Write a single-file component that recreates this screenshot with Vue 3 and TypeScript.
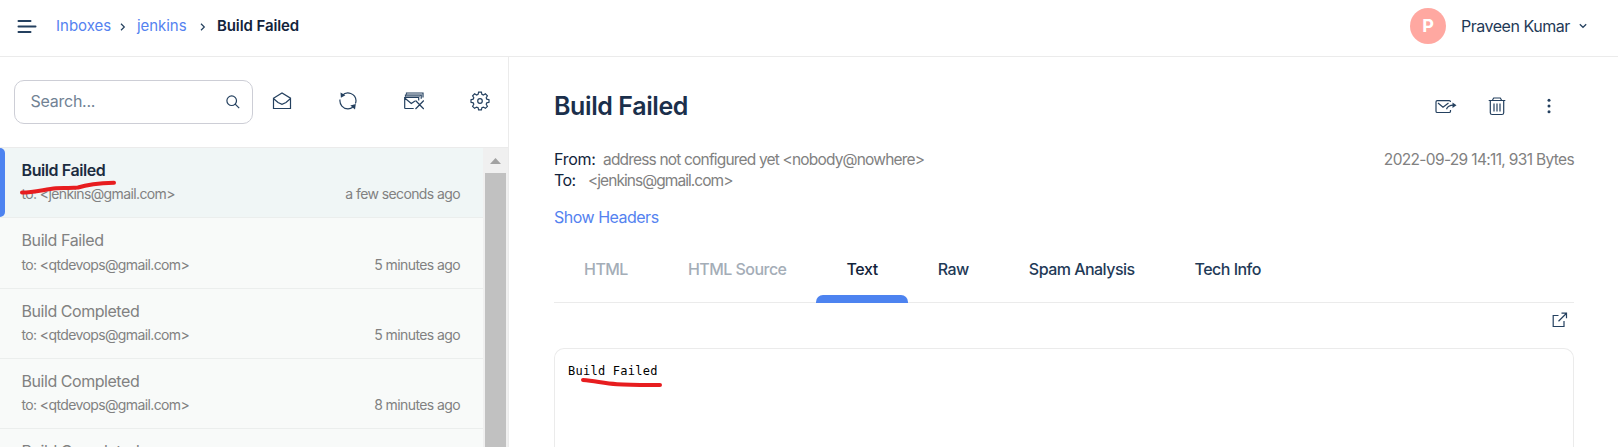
<script setup lang="ts">
interface Mail { subject: string; to: string; age: string; active?: boolean }
interface Tab { label: string; state: string }

const mails: Mail[] = [
  { subject: 'Build Failed', to: '<jenkins@gmail.com>', age: 'a few seconds ago', active: true },
  { subject: 'Build Failed', to: '<qtdevops@gmail.com>', age: '5 minutes ago' },
  { subject: 'Build Completed', to: '<qtdevops@gmail.com>', age: '5 minutes ago' },
  { subject: 'Build Completed', to: '<qtdevops@gmail.com>', age: '8 minutes ago' },
  { subject: 'Build Completed', to: '<qtdevops@gmail.com>', age: '8 minutes ago' },
]

const tabs: Tab[] = [
  { label: 'HTML', state: 'muted' },
  { label: 'HTML Source', state: 'muted' },
  { label: 'Text', state: 'current' },
  { label: 'Raw', state: '' },
  { label: 'Spam Analysis', state: '' },
  { label: 'Tech Info', state: '' },
]
</script>

<template>
  <div class="app">
    <header class="topbar">
      <svg class="burger" width="20" height="16" viewBox="0 0 20 16"><path d="M1.5 2h12M1.5 7.5h17M1.5 13h12" /></svg>
      <nav class="crumbs">
        <a class="c1">Inboxes</a>
        <svg class="s1" width="6" height="8" viewBox="0 0 6 8"><path d="M1 .8 4.3 4 1 7.2" /></svg>
        <a class="c2">jenkins</a>
        <svg class="s2" width="6" height="8" viewBox="0 0 6 8"><path d="M1 .8 4.3 4 1 7.2" /></svg>
        <strong>Build Failed</strong>
      </nav>
      <div class="user">
        <span class="avatar">P</span>
        <span class="name">Praveen Kumar</span>
        <svg width="8" height="6" viewBox="0 0 8 6"><path d="M.8 1.2 4 4.3 7.2 1.2" /></svg>
      </div>
    </header>

    <div class="body">
      <aside class="sidebar">
        <div class="tools">
          <div class="search">
            <span>Search...</span>
            <svg width="14" height="14" viewBox="0 0 14 14"><circle cx="5.7" cy="5.7" r="4.8" /><path d="m9.2 9.2 4 4" /></svg>
          </div>
          <div class="icons">
            <svg width="20" height="20" viewBox="0 0 20 20"><path d="M1.500 7.200 10 2l8.500 5.200V17.500H1.500ZM2 8l4 3.500 4 1.800 4-1.800 4-3.500" /></svg>
            <svg width="20" height="20" viewBox="0 0 20 20"><path d="M4.200 4.500A8 8 0 0 1 18 9.500c0 1.100-.2 2.100-.6 3M2 8.500c-.7 5 3 9.300 8 9.300 1.800 0 3.400-.5 4.800-1.600" /><path class="solid" d="m2.500 1.500 .4 5.300 4.500-2.600ZM12.300 14.600l5.500-1.500-.8 5.400Z" /></svg>
            <svg width="20" height="20" viewBox="0 0 20 20"><path d="M2.500 4V2H19v4.500M1.500 6V4.200h15.700v3.500M.7 17.500v-11h14v3M.7 7l6.600 5.500L11 10M.7 17.500h9M11.500 9.500l8.300 8.500M19.800 9.500 11.500 18" /><path class="shade" d="M2.500 3.100H18M1.500 5.400h14.500" /></svg>
            <svg width="20" height="20" viewBox="0 0 20 20"><circle cx="10" cy="10" r="2.300" /><path d="M8.600 1.200h2.800l.5 2.200 1.500.6 2-1.200 2 2-1.200 2 .6 1.400 2.200.5v2.600l-2.200.5-.6 1.500 1.200 2-2 2-2-1.200-1.500.6-.5 2.200H8.600l-.5-2.200-1.500-.6-2 1.200-2-2 1.200-2-.6-1.500L1 11.300V8.700l2.200-.5.600-1.400-1.200-2 2-2 2 1.200 1.500-.6Z" /></svg>
          </div>
        </div>
        <div class="listwrap">
          <div class="list">
            <div v-for="(m, i) in mails" :key="i" class="mail" :class="{ active: m.active }">
              <div class="subject"><span>{{ m.subject }}</span></div>
              <div class="meta"><span class="to">to: {{ m.to }}</span><span class="age">{{ m.age }}</span></div>
            </div>
          </div>
          <div class="scroll">
            <svg width="11" height="6" viewBox="0 0 11 6"><path d="M5.500 0 11 6H0Z" /></svg>
            <div class="thumb"></div>
          </div>
        </div>
        <svg class="mark mark-list" width="100" height="18" viewBox="0 0 100 18"><path d="M3 12.500c12 0 22-3 34-4.300 7-.7 15 .3 22-.700C67 5 74 3.500 95 2.800" /></svg>
      </aside>

      <main class="content">
        <div class="headline">
          <h1>Build Failed</h1>
          <div class="actions">
            <svg width="22" height="16" viewBox="0 0 22 16"><path d="M15.500 12v1.200q0 1.300-1.300 1.300H2.300Q1 14.500 1 13.200V4q0-1.300 1.300-1.300h11.900q1.300 0 1.300 1.300M3 5l5 4.200 5.500-4.200M11.500 11.300c1-3 3.500-4.100 7-4.100" /><path class="solid" d="m17.500 4.500 4 2.700-4 2.700Z" /></svg>
            <svg width="18" height="20" viewBox="0 0 18 20"><path d="M.7 4.500h16.600M2.300 4.500V16.700q0 1.800 1.800 1.800h9.800q1.800 0 1.800-1.800V4.500M4.500 4l1.200-2h6.600l1.200 2M6 7.500v8M9 7.500v8M12 7.500v8" /></svg>
            <svg class="dots" width="4" height="16" viewBox="0 0 4 16"><circle cx="2" cy="2.300" r="1.500" /><circle cx="2" cy="8" r="1.500" /><circle cx="2" cy="13.700" r="1.500" /></svg>
          </div>
        </div>
        <div class="info">
          <div class="people">
            <div><span class="label from">From:</span><span class="addr">address not configured yet &lt;nobody@nowhere&gt;</span></div>
            <div><span class="label tolabel">To:</span><span class="addr short">&lt;jenkins@gmail.com&gt;</span></div>
          </div>
          <span class="date">2022-09-29 14:11, 931 Bytes</span>
        </div>
        <a class="headers">Show Headers</a>
        <div class="tabs">
          <div v-for="t in tabs" :key="t.label" class="tab" :class="t.state"><span>{{ t.label }}</span></div>
        </div>
        <div class="open">
          <svg width="16" height="16" viewBox="0 0 16 16"><path d="M6.500 3.500H1.200V14.500H12V9M6.500 9.200 14.300 1.500M9.500 1.200h5v5" /></svg>
        </div>
        <div class="mailbody">
          <pre>Build Failed</pre>
          <svg class="mark mark-body" width="86" height="14" viewBox="0 0 86 14"><path d="M3 3c13 1 21 3.600 34 4.200C50 8.200 66 8 80 8" /></svg>
        </div>
      </main>
    </div>
  </div>
</template>

<style>
body { overflow: hidden; }
</style>

<style scoped>
.app { width: 1618px; height: 447px; overflow: hidden; display: flex; flex-direction: column; background: #fff; color: #1f3a57; font-family: Inter, "Liberation Sans", sans-serif; font-size: 16px; }
.app, .app * { box-sizing: border-box; }
svg { display: block; flex: none; fill: none; stroke: #24405f; stroke-width: 1.200; }
span, a, strong { white-space: nowrap; }
.topbar { height: 57px; flex: none; border-bottom: 1px solid #ebebeb; display: flex; align-items: center; padding: 0 31px 5px 17px; }
.burger { stroke-width: 2; stroke-linecap: round; margin-top: 2px; }
.crumbs { display: flex; align-items: center; margin-left: 19px; font-size: 15px; line-height: 20px; }
.crumbs a { color: #5482f0; }
.crumbs svg { margin-top: 3px; }
.c1 { width: 64px; }
.s1 { margin-right: 11px; }
.c2 { width: 63px; letter-spacing: -.05px; }
.s2 { margin-right: 11px; }
.crumbs strong { font-weight: 600; color: #12233b; letter-spacing: -.1px; }
.user { margin-left: auto; display: flex; align-items: center; }
.avatar { width: 36px; height: 36px; border-radius: 50%; background: #ffa8a1; color: #fff; font-weight: 700; font-size: 18px; line-height: 35px; text-align: center; }
.name { margin-left: 15px; width: 118px; letter-spacing: -.48px; line-height: 20px; }
.body { flex: 1; display: flex; min-height: 0; }
.sidebar { width: 509px; flex: none; border-right: 1px solid #ebebeb; position: relative; display: flex; flex-direction: column; }
.tools { height: 91px; flex: none; border-bottom: 1px solid #ebebeb; display: flex; align-items: center; padding: 0 18px 0 14px; }
.search { width: 239px; height: 44px; border: 1px solid #cdced6; border-radius: 10px; display: flex; align-items: center; justify-content: space-between; padding: 0 12px 2px 15.500px; color: #718294; }
.search svg { margin-top: 1px; }
.search span { letter-spacing: -.25px; }
.icons { flex: 1; display: flex; justify-content: space-between; padding: 0 0 2px 19px; }
.solid { fill: #24405f; stroke: none; }
.shade { stroke: #8796a8; }
.listwrap { flex: 1; display: flex; min-height: 0; overflow: hidden; }
.list { width: 483px; background: #f8faf9; }
.mail { height: 70px; border-bottom: 1px solid #ebeeed; padding: 11px 23px 0 21.500px; color: #818181; }
.mail:nth-child(2) { height: 71px; }
.mail.active { background: #f0f6f6; padding-left: 0; display: grid; grid-template-columns: 21.500px 1fr; grid-template-rows: 23px 24px; }
.mail.active::before { content: ""; width: 5px; height: 69px; margin-top: -11px; border-radius: 0 5px 5px 0; background: #4d83f0; grid-row: 1; }
.subject { height: 23px; line-height: 22px; letter-spacing: -.45px; }
.mail:nth-child(2) .subject { height: 24px; letter-spacing: -.4px; }
.active .subject { color: #1b2c40; font-weight: 600; letter-spacing: -.42px; }
.active .meta { grid-column: 2; }
.meta { display: flex; justify-content: space-between; line-height: 24px; font-size: 14px; letter-spacing: -.62px; }
.age { letter-spacing: -.6px; }
.scroll { flex: 1; background: #f0f0f0; display: flex; flex-direction: column; padding: 10px 2px 0; }
.scroll svg { margin: 0 0 9px 5px; }
.scroll svg path { fill: #a2a2a2; stroke: none; }
.thumb { flex: 1; width: 21px; background: #c1c1c1; }
.mark { position: absolute; overflow: visible; stroke: #e71d1f; stroke-width: 4; stroke-linecap: round; }
.mark-list { left: 19px; top: 123px; }
.content { flex: 1; padding: 32px 44px 0 45px; display: flex; flex-direction: column; min-width: 0; }
.headline { height: 34px; flex: none; display: flex; align-items: center; justify-content: space-between; }
h1 { margin: 0; font-size: 25px; font-weight: 600; letter-spacing: -.4px; line-height: 34px; color: #1b2f4b; }
.actions { display: flex; align-items: center; padding-right: 23px; }
.actions svg + svg { margin-left: 31px; }
.actions .dots { margin-left: 41px; fill: #24405f; stroke: none; }
.info { margin-top: 26px; display: flex; justify-content: space-between; line-height: 21px; color: #818181; letter-spacing: -.3px; }
.people > div { display: flex; height: 21px; }
.label { color: #12233b; }
.from { width: 49px; }
.tolabel { width: 34px; letter-spacing: -.6px; }
.addr { font-size: 15.500px; letter-spacing: -.82px; }
.addr.short { letter-spacing: -.95px; }
.date { font-size: 15.500px; letter-spacing: -.66px; }
.headers { margin-top: 15px; line-height: 22px; color: #5482f0; letter-spacing: -.5px; }
.tabs { height: 75px; flex: none; display: flex; border-bottom: 1px solid #ebebeb; font-weight: 450; letter-spacing: -.53px; }
.tab { padding: 0 30px; height: 75px; line-height: 82px; display: flex; }
.muted { color: #a4adb7; font-weight: 500; }
.current { color: #12233b; flex-direction: column; font-weight: 500; letter-spacing: -.4px; }
.current span { height: 67px; }
.current::after { content: ""; height: 8px; margin: 0 -30px; background: #4d83f0; border-radius: 7px 7px 0 0; }
.open { height: 45px; flex: none; display: flex; justify-content: flex-end; padding: 9px 6px 0; }
.mailbody { flex: 1; border: 1px solid #ebebeb; border-bottom: 0; border-radius: 10px 10px 0 0; padding: 14px 13px; position: relative; }
pre { margin: 0; font: 12px/16px "DejaVu Sans Mono", monospace; letter-spacing: .25px; color: #000; }
.mark-body { left: 25px; top: 28px; }
</style>
